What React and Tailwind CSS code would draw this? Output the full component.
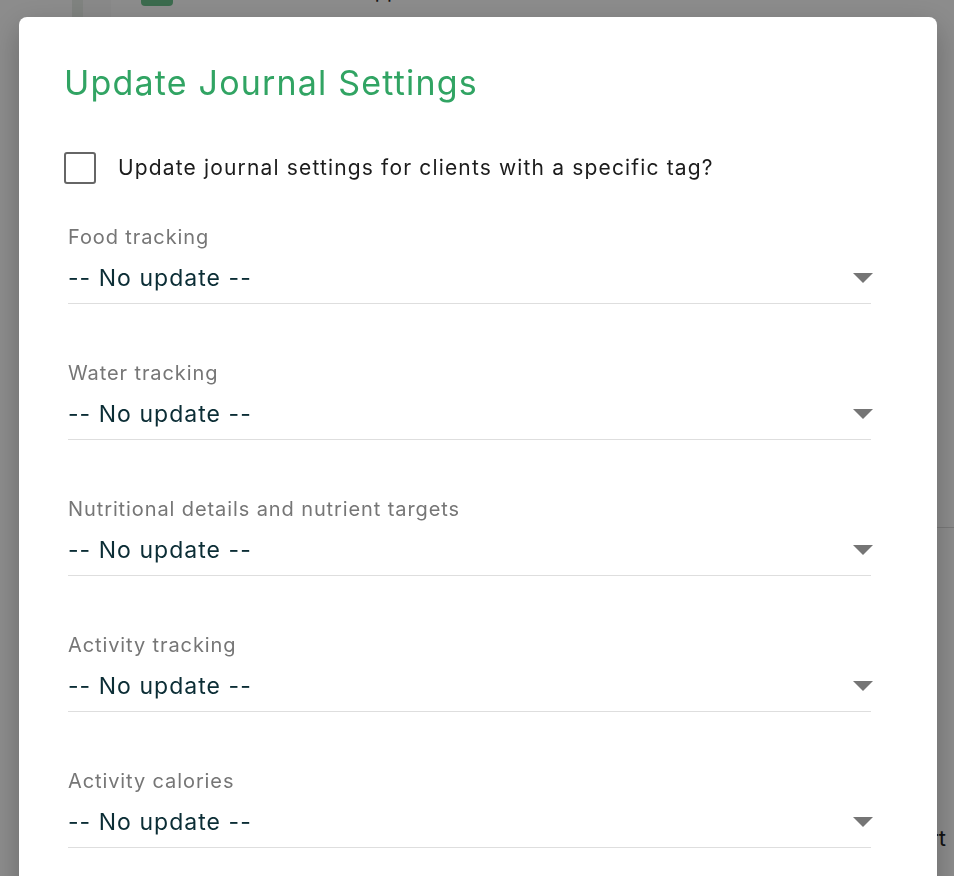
import React from 'react';

const fields = [
  'Food tracking',
  'Water tracking',
  'Nutritional details and nutrient targets',
  'Activity tracking',
  'Activity calories',
  'Weight tracking',
];

function SelectField({ label }) {
  return (
    <div className="w-[803px]">
      <div className="h-6 text-[20px] leading-6 tracking-[0.045em] text-[#767676]">{label}</div>
      <div className="mt-[15px] flex h-[40px] items-start justify-between border-b border-[#dedede]">
        <span className="h-7 text-[23px] leading-7 tracking-[0.045em] text-[#0b2d35]">-- No update --</span>
        <svg width="20" height="10" viewBox="0 0 20 10" className="mt-[9px] -mr-[2px]">
          <path d="M0 0 L20 0 L10 10 Z" fill="#757575" />
        </svg>
      </div>
    </div>
  );
}

export default function App() {
  return (
    <div className="relative h-[876px] overflow-hidden bg-white font-['Inter',sans-serif]">
      {/* page behind the dialog */}
      <div className="flex h-full">
        <div className="w-[72px]" />
        <div className="w-[11px] bg-[#e9eee9]" />
        <div className="w-[28px] bg-[#fafafa]" />
        <div className="flex flex-1 flex-col">
          <div className="flex h-[30px] items-start">
            <div className="ml-[30px] h-[6px] w-[32px] rounded-b-[4px] bg-[#6cc38d]" />
            <span className="ml-[188px] -mt-[21px] text-[20px] leading-6 text-[#222]">App</span>
          </div>
          <div className="mt-[497px] border-t border-[#dcdcdc]" />
          <div className="mt-[296px] pr-[8px] text-right text-[22px] leading-7 text-[#222]">Import</div>
        </div>
      </div>

      {/* dialog */}
      <div className="fixed inset-0 overflow-hidden bg-black/45">
        <div className="ml-[19px] mt-[17px] w-[918px] rounded-[8px] bg-white pb-16 pl-[45px] pt-[46px] shadow-[0_10px_30px_rgba(0,0,0,0.25)]">
          <h2 className="h-10 text-[34px] leading-10 tracking-[0.035em] text-[#31a463]">Update Journal Settings</h2>
          <label className="mt-[49px] flex items-center gap-[22px]">
            <span className="h-8 w-8 rounded-[3px] border-2 border-[#666666]" />
            <span className="text-[21px] leading-7 tracking-[0.055em] text-[#1c1c1c]">
              Update journal settings for clients with a specific tag?
            </span>
          </label>
          <div className="ml-[4px] mt-[41px] flex flex-col gap-[57px]">
            {fields.map((f) => (
              <SelectField key={f} label={f} />
            ))}
          </div>
        </div>
      </div>
    </div>
  );
}
